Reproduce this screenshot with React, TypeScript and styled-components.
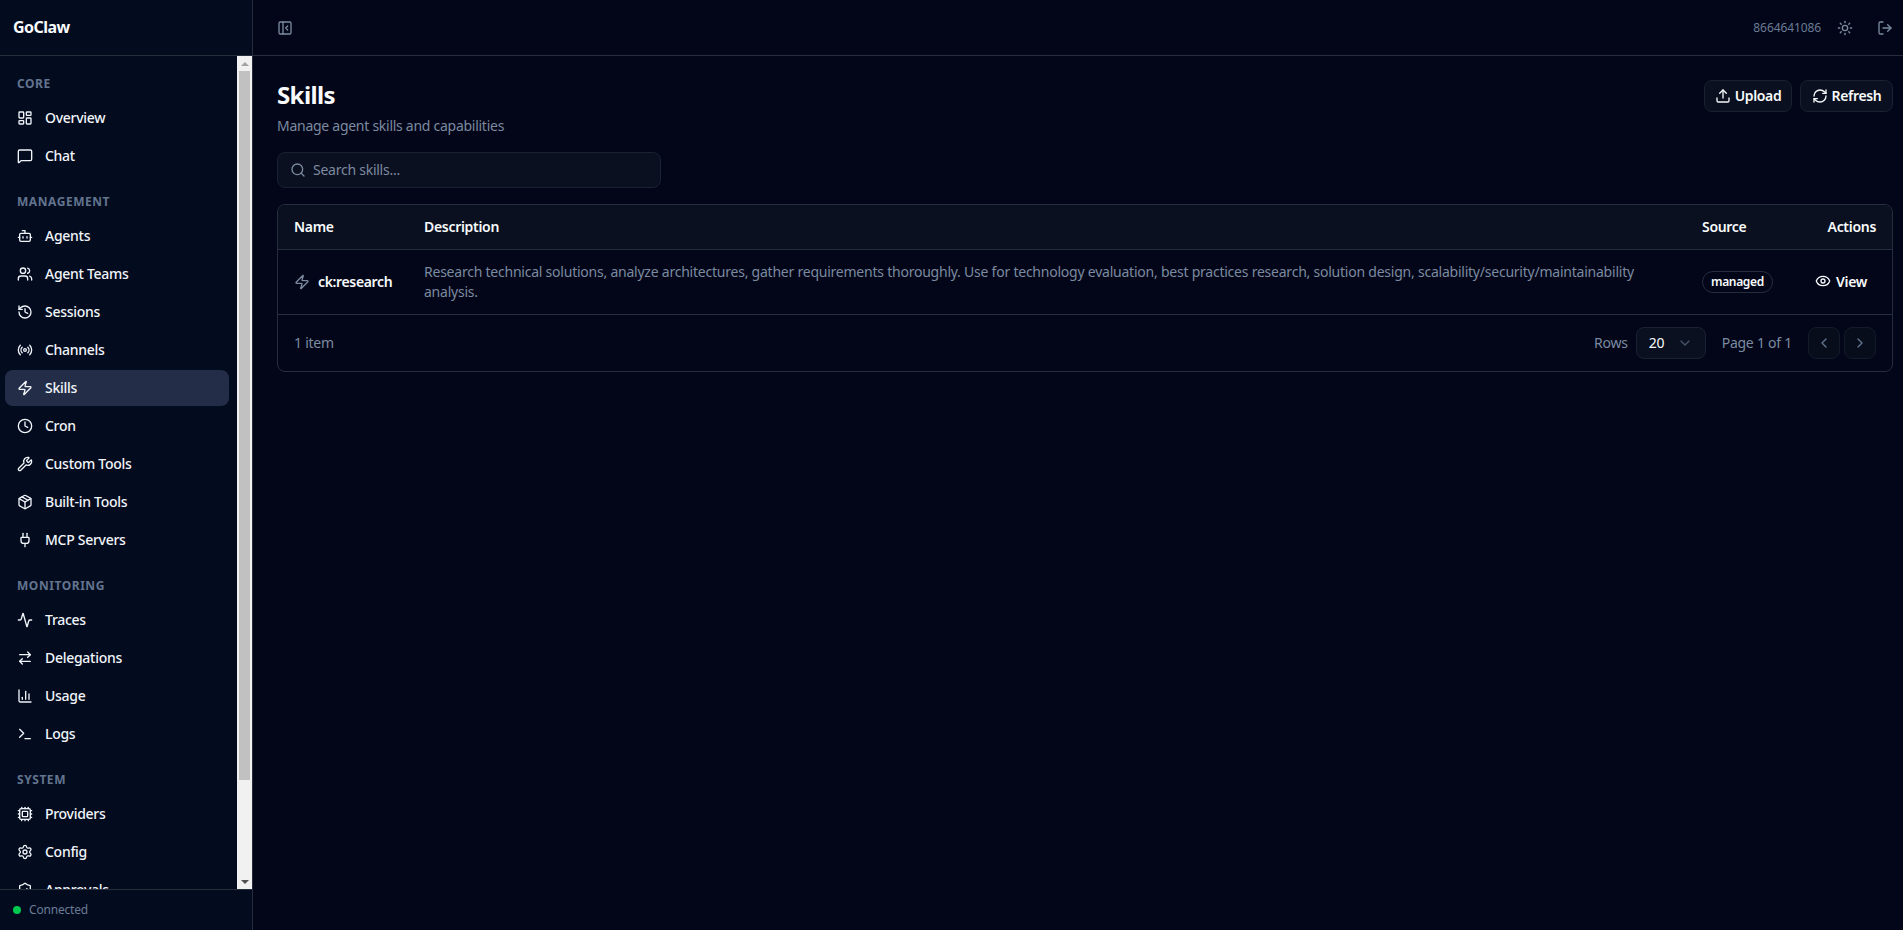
import React from "react";
import styled, { createGlobalStyle } from "styled-components";
import {
  Activity, ArrowRightLeft, Bot, ChartColumn, ChevronDown, ChevronLeft, ChevronRight, Clock, Cpu, Eye, History,
  LayoutDashboard, LogOut, MessageSquare, Package, PanelLeftClose, Plug, Radio, RefreshCw, Search, Settings, ShieldCheck,
  Sun, Terminal, Upload, Users, Wrench, Zap,
} from "lucide-react";

const Global = createGlobalStyle`
  html, body { margin: 0; height: 100%; background: #020618; }
  body { font-family: "Noto Sans", "Liberation Sans", sans-serif; color: #f8fafc; overflow: hidden; }
  * { box-sizing: border-box; }
`;

const Shell = styled.div`
  display: flex;
  height: 930px;
  width: 1903px;
`;
const Sidebar = styled.aside`
  width: 253px;
  flex: none;
  display: flex;
  flex-direction: column;
  background: #030b1f;
  border-right: 1px solid #262d3b;
`;
const Brand = styled.div`
  height: 56px;
  flex: none;
  display: flex;
  align-items: center;
  padding: 0 0 1px 13px;
  font-size: 16px;
  font-weight: 700;
  letter-spacing: -0.55px;
  color: #f8fafc;
  border-bottom: 1px solid #262d3b;
`;
const NavArea = styled.div`
  flex: 1;
  min-height: 0;
  display: flex;
`;
const Nav = styled.nav`
  flex: 1;
  min-width: 0;
  overflow: hidden;
  padding: 17px 8px 0 5px;
  display: flex;
  flex-direction: column;
  gap: 17px;
`;
const ScrollTrack = styled.div`
  width: 15px;
  flex: none;
  display: flex;
  flex-direction: column;
  background: #f1f1f1;
`;
const ScrollArrow = styled.div<{ $down?: boolean }>`
  height: 15px;
  flex: none;
  display: flex;
  align-items: center;
  justify-content: center;
  &::before {
    content: "";
    width: 0;
    height: 0;
    border-left: 4px solid transparent;
    border-right: 4px solid transparent;
    ${(p) => (p.$down ? "border-top: 4px solid #505050;" : "border-bottom: 4px solid #a3a3a3;")}
  }
`;
const ScrollThumb = styled.div`
  height: 709px;
  flex: none;
  margin: 0 2px;
  background: #c1c1c1;
`;
const ScrollRest = styled.div`
  flex: 1;
`;
const Group = styled.div`
  display: flex;
  flex-direction: column;
  gap: 2px;
  flex: none;
`;
const GroupLabel = styled.div`
  height: 20px;
  margin-bottom: 5px;
  padding-left: 12px;
  display: flex;
  align-items: center;
  font-size: 12px;
  font-weight: 700;
  letter-spacing: 0.55px;
  color: #62748e;
  text-transform: uppercase;
`;
const NavItem = styled.a<{ $active?: boolean }>`
  height: 36px;
  flex: none;
  display: flex;
  align-items: center;
  gap: 12px;
  padding: 0 12px;
  border-radius: 8px;
  font-size: 14px;
  font-weight: 500;
  letter-spacing: -0.28px;
  color: #f1f5f9;
  background: ${(p) => (p.$active ? "#232d48" : "transparent")};
  svg { flex: none; }
`;
const NavText = styled.span`
  padding-bottom: 2px;
`;
const Foot = styled.div`
  height: 41px;
  flex: none;
  display: flex;
  align-items: center;
  gap: 8px;
  padding: 0 0 1px 13px;
  border-top: 1px solid #262d3b;
  font-size: 12px;
  letter-spacing: -0.2px;
  color: #6a7b95;
`;
const Dot = styled.span`
  width: 8px;
  height: 8px;
  border-radius: 50%;
  background: #00c950;
`;
const Main = styled.main`
  flex: 1;
  min-width: 0;
  display: flex;
  flex-direction: column;
`;
const TopBar = styled.header`
  height: 56px;
  flex: none;
  display: flex;
  align-items: center;
  justify-content: space-between;
  padding: 0 2px 0 24px;
  border-bottom: 1px solid #262d3b;
  color: #7c8aa0;
`;
const TopRight = styled.div`
  display: flex;
  align-items: center;
  gap: 8px;
`;
const UserId = styled.span`
  font-size: 12px;
  letter-spacing: -0.1px;
  color: #6a7b95;
`;
const IconSlot = styled.span`
  width: 32px;
  height: 32px;
  display: flex;
  align-items: center;
  justify-content: center;
`;
const ToggleSlot = styled(IconSlot)`
  width: 16px;
`;
const Page = styled.div`
  padding: 24px 10px 24px 24px;
`;
const PageHead = styled.div`
  display: flex;
  align-items: flex-start;
  justify-content: space-between;
`;
const Title = styled.h1`
  margin: 0;
  font-size: 24px;
  line-height: 30px;
  padding-bottom: 2px;
  font-weight: 700;
  letter-spacing: -0.6px;
`;
const Subtitle = styled.p`
  margin: 4px 0 0;
  font-size: 14px;
  line-height: 20px;
  letter-spacing: -0.27px;
  color: #7c8aa0;
`;
const HeadActions = styled.div`
  display: flex;
  gap: 8px;
`;
const OutlineBtn = styled.button<{ $w: number }>`
  width: ${(p) => p.$w}px;
  height: 32px;
  padding: 0 0 1px;
  display: flex;
  align-items: center;
  justify-content: center;
  gap: 4px;
  border: 1px solid #1a2130;
  border-radius: 8px;
  background: #0a101f;
  color: #f8fafc;
  font: 600 14px "Noto Sans", sans-serif;
  letter-spacing: -0.35px;
`;
const SearchBox = styled.label`
  margin-top: 16px;
  width: 384px;
  height: 36px;
  display: flex;
  align-items: center;
  gap: 7px;
  padding: 0 12px;
  border: 1px solid #1a2130;
  border-radius: 8px;
  background: #0a101f;
  color: #7c8aa0;
`;
const SearchInput = styled.input`
  flex: 1;
  min-width: 0;
  border: 0;
  outline: 0;
  padding: 0 0 2px;
  background: transparent;
  font: 14px "Noto Sans", sans-serif;
  letter-spacing: -0.25px;
  color: #f8fafc;
  &::placeholder { color: #7c8aa0; opacity: 1; }
`;
const Card = styled.section`
  margin-top: 16px;
  border: 1px solid #262d3b;
  border-radius: 8px;
  overflow: hidden;
`;
const Table = styled.table`
  width: 100%;
  table-layout: fixed;
  border-collapse: collapse;
  font-size: 14px;
`;
const HeadRow = styled.tr`
  background: #0a101f;
  border-bottom: 1px solid #262d3b;
`;
const Th = styled.th<{ $w?: number; $right?: boolean }>`
  ${(p) => (p.$w ? `width: ${p.$w}px;` : "")}
  height: 44px;
  padding: 0 16px;
  font-weight: 600;
  letter-spacing: -0.3px;
  text-align: ${(p) => (p.$right ? "right" : "left")};
  color: #f8fafc;
`;
const BodyRow = styled.tr`
  border-bottom: 1px solid #262d3b;
`;
const Td = styled.td<{ $right?: boolean }>`
  height: 64px;
  padding: 12px 16px;
  text-align: ${(p) => (p.$right ? "right" : "left")};
`;
const NameCell = styled.div`
  display: flex;
  align-items: center;
  gap: 8px;
  font-weight: 600;
  letter-spacing: -0.35px;
  white-space: nowrap;
  color: #f8fafc;
  svg { color: #7c8aa0; flex: none; }
`;
const Desc = styled.div`
  line-height: 20px;
  letter-spacing: -0.23px;
  color: #7c8aa0;
`;
const Badge = styled.span`
  display: inline-flex;
  align-items: center;
  height: 22px;
  padding: 0 8px 1px;
  border: 1px solid #262d3b;
  border-radius: 999px;
  font-size: 12px;
  font-weight: 600;
  letter-spacing: -0.35px;
  color: #f8fafc;
`;
const GhostBtn = styled.button`
  height: 32px;
  padding: 0 12px 1px 10px;
  display: inline-flex;
  align-items: center;
  gap: 5px;
  border: 0;
  background: transparent;
  color: #f8fafc;
  font: 600 14px "Noto Sans", sans-serif;
  letter-spacing: -0.3px;
`;
const Footer = styled.div`
  height: 56px;
  display: flex;
  align-items: center;
  justify-content: space-between;
  padding: 0 16px;
  font-size: 14px;
  letter-spacing: -0.25px;
  color: #7c8aa0;
`;
const Pager = styled.div`
  display: flex;
  align-items: center;
`;
const RowsSelect = styled.div`
  width: 70px;
  height: 32px;
  margin: 0 16px 0 8px;
  padding: 0 12px;
  display: flex;
  align-items: center;
  justify-content: space-between;
  border: 1px solid #1a2130;
  border-radius: 8px;
  background: #0a101f;
  color: #f8fafc;
  svg { color: #45556c; }
`;
const PageBtn = styled.button`
  width: 32px;
  height: 32px;
  margin-left: 4px;
  display: flex;
  align-items: center;
  justify-content: center;
  padding: 0;
  border: 1px solid #141a29;
  border-radius: 8px;
  background: #080d1c;
  color: #62748e;
  &:first-of-type { margin-left: 16px; }
`;

const groups: { label: string; items: [string, React.ComponentType<{ size?: number; strokeWidth?: number }>][] }[] = [
  { label: "Core", items: [["Overview", LayoutDashboard], ["Chat", MessageSquare]] },
  { label: "Management", items: [["Agents", Bot], ["Agent Teams", Users], ["Sessions", History], ["Channels", Radio], ["Skills", Zap], ["Cron", Clock], ["Custom Tools", Wrench], ["Built-in Tools", Package], ["MCP Servers", Plug]] },
  { label: "Monitoring", items: [["Traces", Activity], ["Delegations", ArrowRightLeft], ["Usage", ChartColumn], ["Logs", Terminal]] },
  { label: "System", items: [["Providers", Cpu], ["Config", Settings], ["Approvals", ShieldCheck]] },
];

export default function App() {
  return (
    <Shell>
      <Global />
      <Sidebar>
        <Brand>GoClaw</Brand>
        <NavArea>
          <Nav>
            {groups.map((g) => (
              <Group key={g.label}>
                <GroupLabel>{g.label}</GroupLabel>
                {g.items.map(([name, Icon]) => (
                  <NavItem key={name} $active={name === "Skills"}>
                    <Icon size={16} />
                    <NavText>{name}</NavText>
                  </NavItem>
                ))}
              </Group>
            ))}
          </Nav>
          <ScrollTrack>
            <ScrollArrow />
            <ScrollThumb />
            <ScrollRest />
            <ScrollArrow $down />
          </ScrollTrack>
        </NavArea>
        <Foot><Dot />Connected</Foot>
      </Sidebar>
      <Main>
        <TopBar>
          <ToggleSlot><PanelLeftClose size={16} /></ToggleSlot>
          <TopRight>
            <UserId>8664641086</UserId>
            <IconSlot><Sun size={16} /></IconSlot>
            <IconSlot><LogOut size={16} /></IconSlot>
          </TopRight>
        </TopBar>
        <Page>
          <PageHead>
            <div>
              <Title>Skills</Title>
              <Subtitle>Manage agent skills and capabilities</Subtitle>
            </div>
            <HeadActions>
              <OutlineBtn $w={88}><Upload size={16} />Upload</OutlineBtn>
              <OutlineBtn $w={93}><RefreshCw size={16} />Refresh</OutlineBtn>
            </HeadActions>
          </PageHead>
          <SearchBox>
            <Search size={16} />
            <SearchInput placeholder="Search skills..." />
          </SearchBox>
          <Card>
            <Table>
              <thead>
                <HeadRow>
                  <Th $w={130}>Name</Th>
                  <Th>Description</Th>
                  <Th $w={103}>Source</Th>
                  <Th $w={103} $right>Actions</Th>
                </HeadRow>
              </thead>
              <tbody>
                <BodyRow>
                  <Td><NameCell><Zap size={16} />ck:research</NameCell></Td>
                  <Td><Desc>Research technical solutions, analyze architectures, gather requirements thoroughly. Use for technology evaluation, best practices research, solution design, scalability/security/maintainability analysis.</Desc></Td>
                  <Td><Badge>managed</Badge></Td>
                  <Td $right><GhostBtn><Eye size={16} />View</GhostBtn></Td>
                </BodyRow>
              </tbody>
            </Table>
            <Footer>
              <span>1 item</span>
              <Pager>
                Rows
                <RowsSelect>20<ChevronDown size={16} /></RowsSelect>
                Page 1 of 1
                <PageBtn><ChevronLeft size={16} /></PageBtn>
                <PageBtn><ChevronRight size={16} /></PageBtn>
              </Pager>
            </Footer>
          </Card>
        </Page>
      </Main>
    </Shell>
  );
}
